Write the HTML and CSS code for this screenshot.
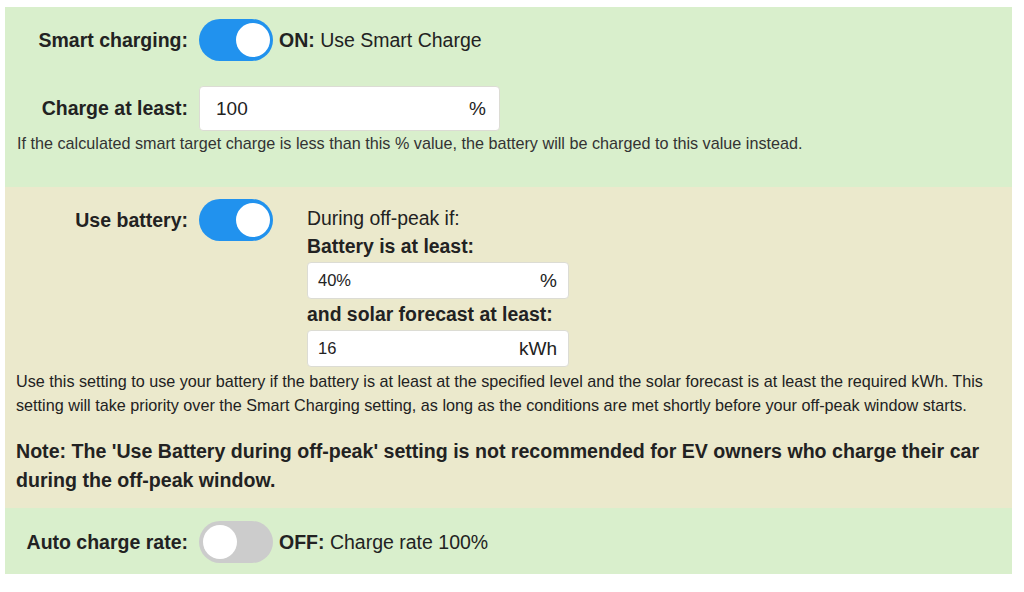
FILE: index.html
```html
<!DOCTYPE html>
<html>
<head>
<meta charset="utf-8">
<link rel="stylesheet" href="styles.css">
</head>
<body>
<div class="panel">
  <section class="sec sec-green sec-smart">
    <div class="row">
      <div class="label">Smart charging:</div>
      <span class="toggle on"><span class="knob"></span></span>
      <div class="state"><b>ON:</b> Use Smart Charge</div>
    </div>
    <div class="row row-input">
      <div class="label">Charge at least:</div>
      <div class="field field-lg"><span>100</span><span>%</span></div>
    </div>
    <p class="help">If the calculated smart target charge is less than this % value, the battery will be charged to this value instead.</p>
  </section>

  <section class="sec sec-beige">
    <div class="row row-top">
      <div class="label">Use battery:</div>
      <span class="toggle on"><span class="knob"></span></span>
      <div class="conds">
        <div class="cond-head">During off-peak if:</div>
        <div class="cond-label">Battery is at least:</div>
        <div class="field field-sm"><span>40%</span><span class="unit">%</span></div>
        <div class="cond-label">and solar forecast at least:</div>
        <div class="field field-sm"><span>16</span><span class="unit">kWh</span></div>
      </div>
    </div>
    <p class="desc">Use this setting to use your battery if the battery is at least at the specified level and the solar forecast is at least the required kWh. This setting will take priority over the Smart Charging setting, as long as the conditions are met shortly before your off-peak window starts.</p>
    <p class="note">Note: The 'Use Battery during off-peak' setting is not recommended for EV owners who charge their car during the off-peak window.</p>
  </section>

  <section class="sec sec-green sec-rate">
    <div class="row">
      <div class="label">Auto charge rate:</div>
      <span class="toggle off"><span class="knob"></span></span>
      <div class="state"><b>OFF:</b> Charge rate 100%</div>
    </div>
  </section>
</div>
</body>
</html>
```

FILE: styles.css
```css
html, body {
  margin: 0;
  padding: 0;
  background: #fff;
}

body {
  font-family: "Liberation Sans", Arial, sans-serif;
  color: #222;
}

.panel {
  margin: 7px 0 0 5px;
  width: 1007px;
}

.sec {
  box-sizing: border-box;
}

.sec-green {
  background: #d9efcc;
}

.sec-beige {
  background: #ebe9cc;
}

.sec-smart {
  height: 180px;
  padding-top: 12px;
}

.sec-beige {
  height: 321px;
  padding-top: 12px;
}

.sec-rate {
  height: 66px;
  padding-top: 13px;
}

.row {
  display: flex;
  align-items: center;
  height: 42px;
}

.row-top {
  align-items: flex-start;
  height: auto;
}

.row-input {
  margin-top: 25px;
  height: 45px;
}

.label {
  width: 183px;
  text-align: right;
  font-weight: bold;
  font-size: 19.5px;
  flex: none;
}

.row-top .label {
  line-height: 42px;
}

.toggle {
  position: relative;
  flex: none;
  width: 74px;
  height: 42px;
  border-radius: 21px;
  margin-left: 11px;
  box-sizing: border-box;
}

.toggle.on {
  background: #2192ee;
}

.toggle.off {
  background: #cccccc;
}

.knob {
  position: absolute;
  top: 4px;
  width: 34px;
  height: 34px;
  border-radius: 50%;
  background: #fff;
}

.toggle.on .knob {
  right: 3px;
}

.toggle.off .knob {
  left: 4px;
}

.state {
  margin-left: 6px;
  font-size: 19.5px;
  color: #222;
}

.field {
  display: flex;
  justify-content: space-between;
  align-items: center;
  background: #fff;
  border: 1px solid #dcdcd4;
  border-radius: 4px;
  box-sizing: border-box;
  color: #222;
}

.field-lg {
  margin-left: 11px;
  width: 301px;
  height: 45px;
  padding: 0 13px 0 16px;
  font-size: 19px;
}

.field-sm {
  width: 262px;
  height: 37px;
  padding: 0 11px 0 10px;
  font-size: 16.5px;
  margin-top: 3px;
}

.field-sm .unit {
  font-size: 19px;
}

.help {
  margin: 2px 0 0 12px;
  font-size: 16.2px;
  line-height: 20px;
  color: #333;
}

.conds {
  margin-left: 34px;
  margin-top: 6px;
}

.cond-head {
  font-size: 19.4px;
  line-height: 26px;
}

.cond-label {
  font-size: 19.4px;
  line-height: 26px;
  font-weight: bold;
  margin-top: 2px;
}

.desc {
  margin: 2px 0 0 11px;
  font-size: 16.2px;
  line-height: 24px;
  color: #222;
}

.note {
  margin: 20px 0 0 11px;
  font-size: 19.6px;
  line-height: 29px;
  font-weight: bold;
  color: #222;
}
```
